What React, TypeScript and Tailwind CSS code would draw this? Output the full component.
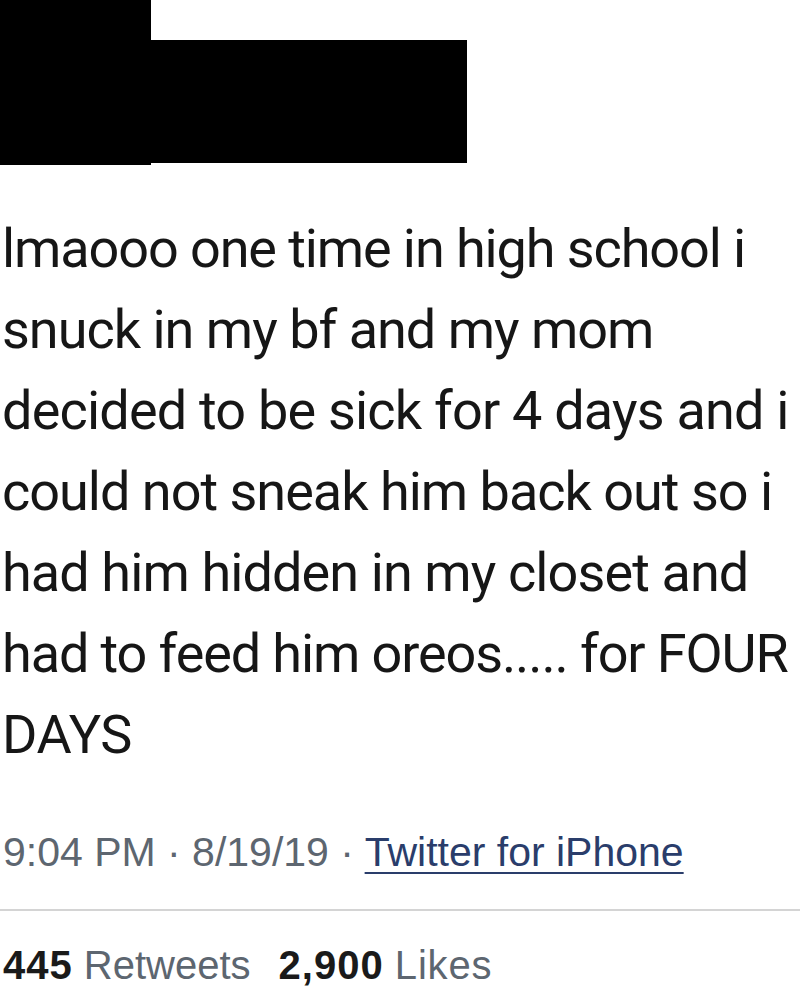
const lines = [
  { text: 'lmaooo one time in high school i', track: 'tracking-[-1.1px]' },
  { text: 'snuck in my bf and my mom', track: 'tracking-[-1px]' },
  { text: 'decided to be sick for 4 days and i', track: 'tracking-[-0.8px]' },
  { text: 'could not sneak him back out so i', track: 'tracking-[-1px]' },
  { text: 'had him hidden in my closet and', track: 'tracking-[-0.9px]' },
  { text: 'had to feed him oreos..... for FOUR', track: 'tracking-[-1.1px]' },
  { text: 'DAYS', track: 'tracking-[-0.5px]' },
];

export default function App() {
  return (
    <div className="w-[800px] h-[1000px] bg-white overflow-hidden font-['Liberation_Sans',Arial,sans-serif]">
      {/* Redacted header */}
      <div className="flex items-start">
        <div className="w-[151px] h-[165px] bg-black" />
        <div className="mt-[40px] w-[316px] h-[123px] bg-black" />
      </div>

      {/* Tweet body */}
      <div className="mt-[43px] pl-[2px] font-['Roboto',sans-serif] text-[54px] leading-[81px] text-[#161616] whitespace-nowrap">
        {lines.map(({ text, track }) => (
          <div key={text} className={track}>
            {text}
          </div>
        ))}
      </div>

      {/* Meta */}
      <div className="mt-[53px] pl-[3px] text-[41px] leading-[48px] text-[#5d6670] whitespace-nowrap">
        9:04 PM · 8/19/19 ·{' '}
        <span className="text-[#2a3d6b] underline decoration-[2px] underline-offset-[6px]">
          Twitter for iPhone
        </span>
      </div>

      <div className="mt-[33px] h-[2px] bg-[#d4d4d4]" />

      {/* Stats */}
      <div className="mt-[30px] pl-[3px] text-[40px] leading-[48px] text-[#5d6670] whitespace-nowrap">
        <span className="font-bold text-[#1a1a1a] tracking-[1px]">445</span> Retweets
        <span className="ml-[28px] font-bold text-[#1a1a1a] tracking-[1px]">2,900</span>{' '}
        <span className="tracking-[0.8px]">Likes</span>
      </div>
    </div>
  );
}
